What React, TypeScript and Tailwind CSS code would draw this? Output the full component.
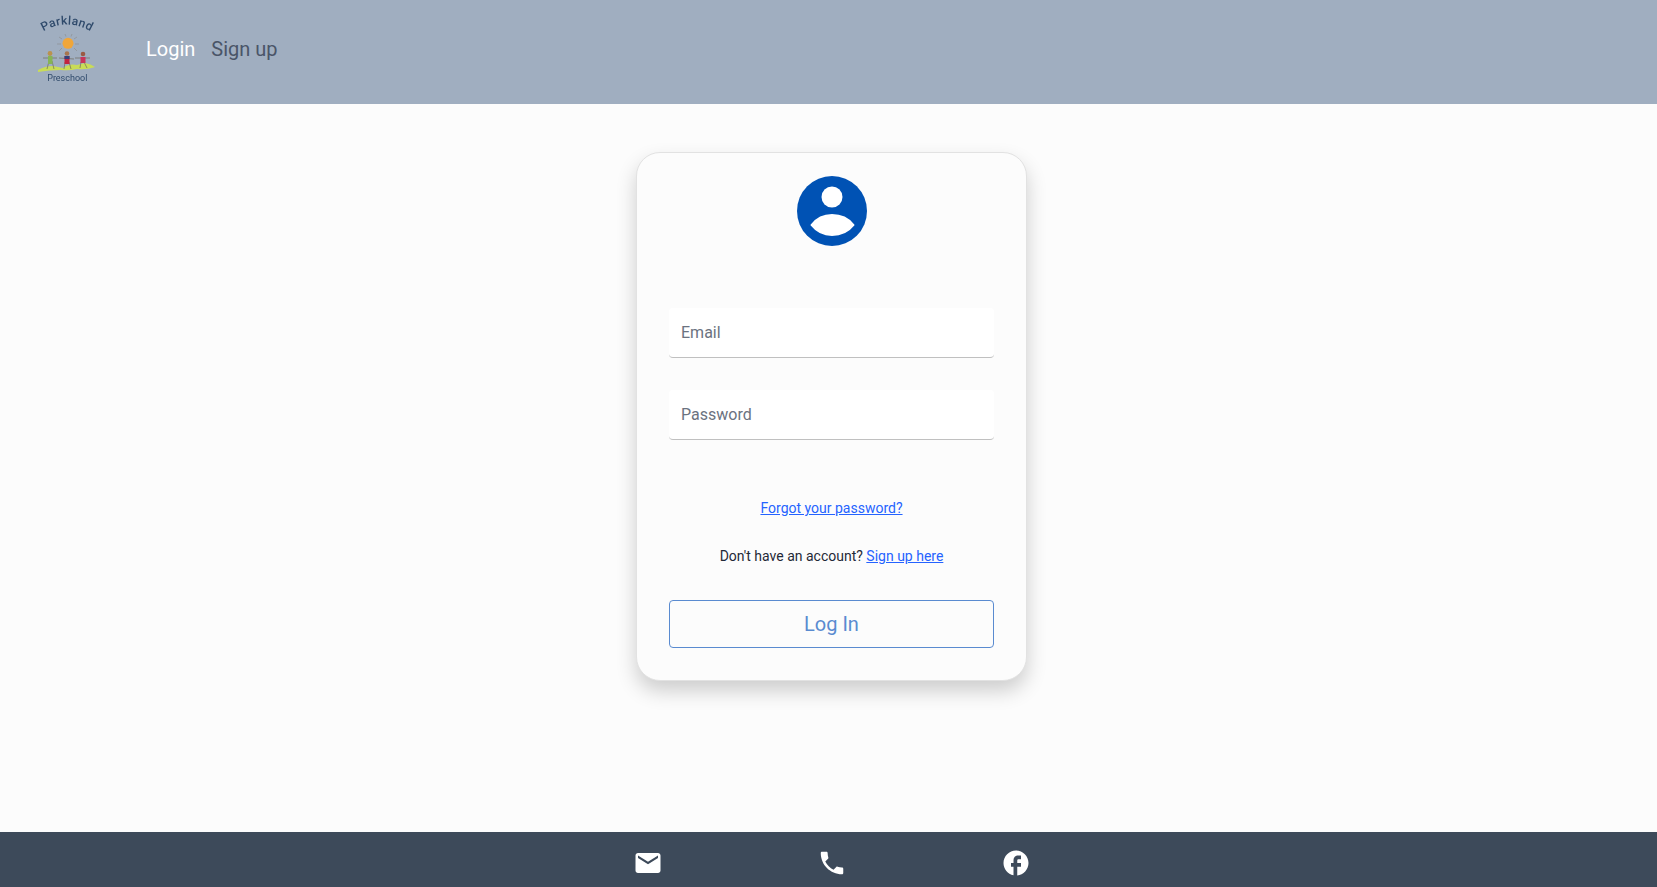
import { MdEmail, MdPhone, MdFacebook } from "react-icons/md";

const Logo = () => (
  <svg viewBox="0 0 70 72" className="w-[70px] h-[72px] blur-[0.4px] overflow-visible">
    <defs>
      <path id="logo-arc" d="M1 24 Q34 -3 67 24" fill="none" />
    </defs>
    <text fontFamily="Roboto, sans-serif" fontSize="12" fontWeight="500" fill="#2f4a6b" letterSpacing="0.3">
      <textPath href="#logo-arc" startOffset="50%" textAnchor="middle">Parkland</textPath>
    </text>
    {/* sun */}
    <g stroke="#8d8f92" strokeWidth="0.7">
      <path d="M32 20 l1 2.5 M39 20 l-1 2.5 M26 23 l3 2 M44 23 l-3 2 M24 30 h4 M46 30 h-4 M26 37 l3 -3 M44 37 l-3 -3" />
    </g>
    <circle cx="35" cy="29.3" r="5.5" fill="#f0a63a" />
    {/* ground */}
    <path d="M5 56 Q12 52 20 52 L30 54 Q36 49 44 51 L52 49 Q58 50 62 53 Q54 56 44 55 Q36 57 28 56 Q16 56 5 58 Z" fill="#c9dc57" />
    {/* kids */}
    <g strokeWidth="0.7" stroke="#6f6a5f" fill="none">
      <path d="M10 44 L24 44 M26 44 L41 45 M42 44 L57 44" />
      <path d="M16 47 L14 55 M19 47 L21 55 M32 48 L31 55 M36 48 L38 55 M48 48 L47 54 M51 48 L54 54" />
    </g>
    <rect x="15" y="42" width="4.5" height="8" fill="#86b455" />
    <rect x="31.5" y="42" width="5" height="8" fill="#c3243f" />
    <rect x="31.5" y="42" width="5" height="3" fill="#34407a" />
    <rect x="47.5" y="43" width="5" height="6" fill="#c8345a" />
    <circle cx="17" cy="39.5" r="2.4" fill="#b9924f" />
    <circle cx="34" cy="39.5" r="2.3" fill="#a8744d" />
    <circle cx="50" cy="40" r="2.3" fill="#9a5a44" />
    <text x="34.3" y="67" textAnchor="middle" fontFamily="Roboto, sans-serif" fontSize="9" fill="#2f4a6b">Preschool</text>
  </svg>
);

const Avatar = () => (
  <svg viewBox="0 0 70 70" className="w-[70px] h-[70px]">
    <circle cx="35" cy="35" r="35" fill="#0052b4" />
    <circle cx="35" cy="21" r="10.5" fill="#fff" />
    <path d="M14.5 49 C20 42 28 39 35 39 C43 39 51 42 56.5 49 C51 56 43 59 35 59 C28 59 20 56 14.5 49 Z" fill="#fff" stroke="#fff" strokeLinejoin="round" strokeWidth="2" />
  </svg>
);

const Field = ({ placeholder, type }: { placeholder: string; type: string }) => (
  <input
    type={type}
    placeholder={placeholder}
    className="block w-full h-[50px] px-3 bg-white rounded border-b border-[#c0c0c0] text-base outline-none placeholder:text-[#6b7280]"
  />
);

const App = () => {
  return (
    <div className="h-screen flex flex-col bg-[#fcfcfc] font-['Roboto',sans-serif] overflow-hidden">
      <header className="h-[104px] shrink-0 bg-[#a0aec0] flex items-start">
        <div className="ml-[33px] mt-[14px]">
          <Logo />
        </div>
        <nav className="ml-[43px] mt-[37px] flex gap-4 text-xl leading-6">
          <a href="#" className="text-white">Login</a>
          <a href="#" className="text-[#4a5568]">Sign up</a>
        </nav>
      </header>

      <main className="flex-1 flex justify-center items-start pt-[48px] pl-[6px]">
        <div className="w-[391px] h-[529px] px-8 pt-[23px] rounded-[24px] border border-[#e2e2e2] bg-[#fcfcfc] shadow-[0_10px_20px_rgba(0,0,0,0.19)] flex flex-col">
          <div className="flex justify-center">
            <Avatar />
          </div>
          <div className="mt-[62px] flex flex-col gap-[32px]">
            <Field placeholder="Email" type="email" />
            <Field placeholder="Password" type="password" />
          </div>
          <p className="mt-[58px] text-center text-sm leading-5">
            <a href="#" className="text-[#2563ff] underline">Forgot your password?</a>
          </p>
          <p className="mt-[28px] text-center text-sm leading-5 text-[#1f2937]">
            Don't have an account? <a href="#" className="text-[#2563ff] underline">Sign up here</a>
          </p>
          <button className="mt-[34px] h-[48px] w-full rounded border border-[#5a8bd0] text-xl text-[#5a8bd0]">
            Log In
          </button>
        </div>
      </main>

      <footer className="h-[55px] shrink-0 bg-[#3d4a5a] flex justify-center items-center pt-[6px] pl-[6px] text-white">
        <div className="w-[184px] flex justify-center"><MdEmail size={30} /></div>
        <div className="w-[184px] flex justify-center"><MdPhone size={30} /></div>
        <div className="w-[184px] flex justify-center"><MdFacebook size={30} /></div>
      </footer>
    </div>
  );
};

export default App;
